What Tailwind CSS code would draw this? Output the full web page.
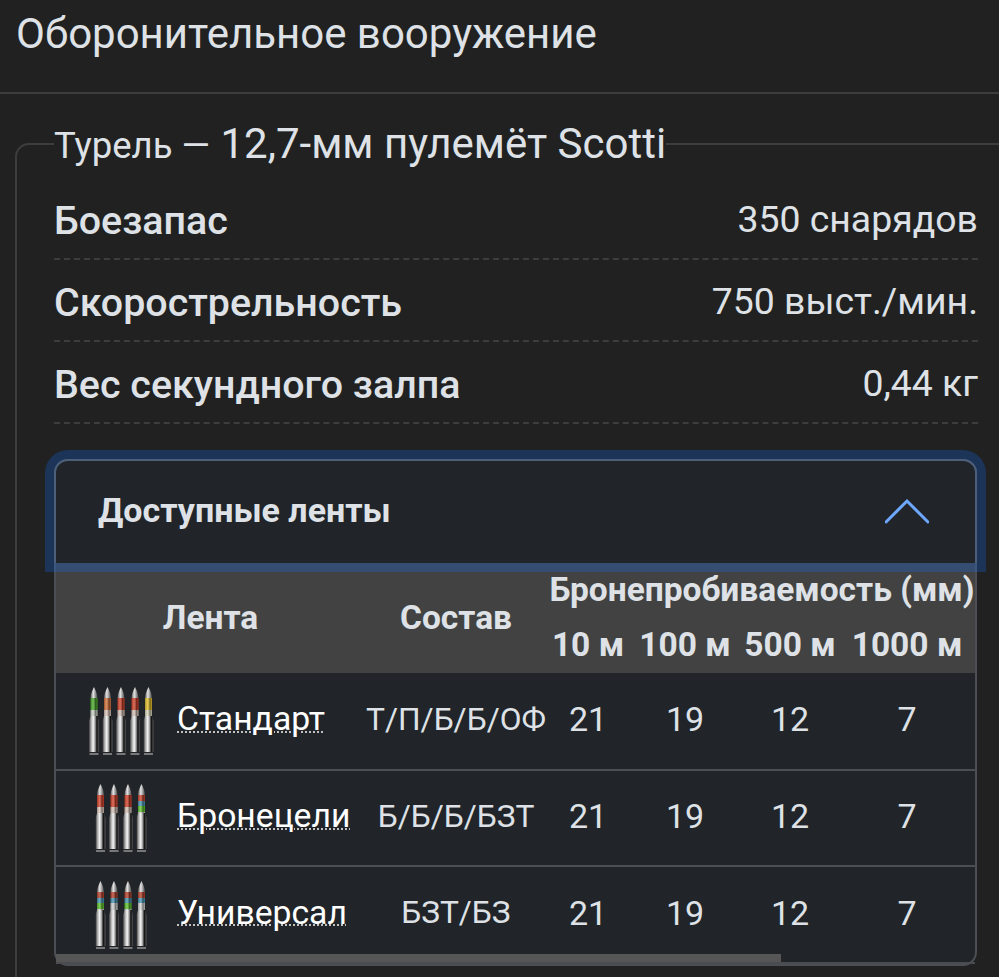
<!DOCTYPE html>
<html lang="ru">
<head>
    <meta charset="UTF-8">
    <meta name="viewport" content="width=device-width, initial-scale=1.0">
    <title>Оборонительное вооружение</title>
    <script src="https://cdn.jsdelivr.net/npm/@tailwindcss/browser@4"></script>
</head>
<body class="bg-[#212121] text-[#dee2e6] font-['Roboto',sans-serif]">
<div class="w-[999px] h-[977px] overflow-hidden">

    <!-- Заголовок -->
    <div class="h-[94px] border-b-2 border-[#3d3d3d] pl-[16px] pt-[10px]">
        <h2 class="text-[42px] leading-[48px] font-normal">Оборонительное вооружение</h2>
    </div>

    <svg class="absolute w-0 h-0" aria-hidden="true">
        <defs>
            <linearGradient id="caseGrad" x1="0" x2="1" y1="0" y2="0">
                <stop offset="0" stop-color="#3a3a3a"/>
                <stop offset="0.2" stop-color="#a8a8a8"/>
                <stop offset="0.42" stop-color="#f6f6f6"/>
                <stop offset="0.62" stop-color="#9a9a9a"/>
                <stop offset="0.78" stop-color="#101010"/>
                <stop offset="1" stop-color="#555555"/>
            </linearGradient>
            <linearGradient id="tipGrad" x1="0" x2="1" y1="0" y2="0">
                <stop offset="0" stop-color="#555555"/>
                <stop offset="0.4" stop-color="#e6e6e6"/>
                <stop offset="1" stop-color="#444444"/>
            </linearGradient>
            <linearGradient id="bandGrad" x1="0" x2="1" y1="0" y2="0">
                <stop offset="0" stop-color="#000000" stop-opacity="0.25"/>
                <stop offset="0.35" stop-color="#ffffff" stop-opacity="0.2"/>
                <stop offset="0.7" stop-color="#000000" stop-opacity="0.45"/>
                <stop offset="1" stop-color="#000000" stop-opacity="0.2"/>
            </linearGradient>
            <g id="bullet">
                <path d="M0 0 C1.5 3 3.5 7 3.5 11 H-3.5 C-3.5 7 -1.5 3 0 0 Z" fill="url(#tipGrad)"/>
                <rect x="-3.5" y="11" width="7" height="18" fill="url(#bandGrad)"/>
                <path d="M-3.5 29 H3.5 L5 34 V65 H-5 V34 Z" fill="url(#caseGrad)"/>
                <rect x="-4.5" y="66" width="9" height="2" fill="#777777"/>
            </g>
        </defs>
    </svg>

    <fieldset class="ml-[15px] mt-[27px] w-[1002px] h-[1000px] border-2 border-[#3d3d3d] rounded-[14px] px-[37px]">
        <legend class="h-[46px] text-[42px] leading-[46px]"><span class="text-[36.5px]">Турель —</span> 12,7-мм пулемёт Scotti</legend>

        <div class="flex justify-between items-center h-[82px] mt-[11px] pt-[5px] border-b-2 border-dashed border-[#3d3d3d]">
            <span class="text-[39.4px] leading-[46px] font-medium">Боезапас</span>
            <span class="text-[37.4px] leading-[46px] pb-[3px]">350 снарядов</span>
        </div>
        <div class="flex justify-between items-center h-[82px] pt-[5px] border-b-2 border-dashed border-[#3d3d3d]">
            <span class="text-[39.4px] leading-[46px] font-medium">Скорострельность</span>
            <span class="text-[37.4px] leading-[46px] pb-[3px]">750 выст./мин.</span>
        </div>
        <div class="flex justify-between items-center h-[82px] pt-[5px] border-b-2 border-dashed border-[#3d3d3d]">
            <span class="text-[39.4px] leading-[46px] font-medium">Вес секундного залпа</span>
            <span class="text-[37.4px] leading-[46px] pb-[3px]">0,44 кг</span>
        </div>

        <!-- Аккордеон -->
        <div class="relative mt-[35px] w-[923px] rounded-[14px] border-2 border-[#4b4f55] bg-[#212529]">
            <div class="relative z-10 h-[104px] -m-[2px] mb-0 flex items-center justify-between pl-[42px] pr-[46px] rounded-t-[14px] border-2 border-b-0 border-[#4d5f78] bg-[#212529] shadow-[0_0_0_9px_rgba(13,110,253,0.25)]">
                <span class="text-[34px] font-bold pb-[4px]">Доступные ленты</span>
                <svg class="w-[44px] h-[26px] mb-[2px]" viewBox="0 0 44 26" fill="none" stroke="#6ea8fe" stroke-width="3" stroke-linecap="round" stroke-linejoin="miter">
                    <path d="M1 24 L22 3 L43 24"/>
                </svg>
            </div>

            <div class="relative overflow-hidden border-b-2 border-[#4a4c50]">
                <table class="w-[1173px] table-fixed border-collapse text-center">
                    <colgroup>
                        <col class="w-[309px]">
                        <col class="w-[182px]">
                        <col class="w-[82px]">
                        <col class="w-[112px]">
                        <col class="w-[98px]">
                        <col class="w-[136px]">
                        <col>
                    </colgroup>
                    <thead class="bg-[#424242] text-[33.5px] font-bold">
                        <tr class="h-[55px] align-bottom">
                            <th rowspan="2" class="align-middle">Лента</th>
                            <th rowspan="2" class="align-middle">Состав</th>
                            <th colspan="4" class="whitespace-nowrap pb-[3px] pl-[2px]">Бронепробиваемость (мм)</th>
                            <th rowspan="2"></th>
                        </tr>
                        <tr class="h-[55px]">
                            <th class="whitespace-nowrap">10 м</th>
                            <th class="whitespace-nowrap">100 м</th>
                            <th class="whitespace-nowrap">500 м</th>
                            <th class="whitespace-nowrap">1000 м</th>
                        </tr>
                    </thead>
                    <tbody class="text-[34px] [&_td]:pb-[3px]">
                        <tr class="h-[97px] border-b-2 border-[#4b4f55]">
                            <td>
                                <div class="flex items-center pl-[29px] gap-[16px]">
                                    <svg class="w-[76px] h-[72px] mt-[3px] shrink-0" viewBox="0 0 76 72">
                                        <rect x="5.5" y="13" width="7" height="12" fill="#4cab2c"/><rect x="5.5" y="25" width="7" height="6" fill="#c9d2c4"/><use href="#bullet" x="9" y="2"/>
                                        <rect x="19" y="13" width="7" height="12" fill="#d0703a"/><rect x="19" y="25" width="7" height="6" fill="#d8c4b8"/><use href="#bullet" x="22.5" y="2"/>
                                        <rect x="32.5" y="13" width="7" height="12" fill="#d2432c"/><rect x="32.5" y="25" width="7" height="6" fill="#d8c4b8"/><use href="#bullet" x="36" y="2"/>
                                        <rect x="46.5" y="13" width="7" height="12" fill="#d2432c"/><rect x="46.5" y="25" width="7" height="6" fill="#d8c4b8"/><use href="#bullet" x="50" y="2"/>
                                        <rect x="60" y="13" width="7" height="12" fill="#e0bd2c"/><rect x="60" y="25" width="7" height="6" fill="#d8d4b8"/><use href="#bullet" x="63.5" y="2"/>
                                    </svg>
                                    <span class="text-[33.7px] text-white underline decoration-dotted decoration-2 decoration-[#c0c0c0] underline-offset-[1px]">Стандарт</span>
                                </div>
                            </td>
                            <td class="text-[31.7px] whitespace-nowrap">Т/П/Б/Б/ОФ</td><td>21</td><td>19</td><td>12</td><td>7</td><td></td>
                        </tr>
                        <tr class="h-[96px] border-b-2 border-[#4b4f55]">
                            <td>
                                <div class="flex items-center pl-[29px] gap-[16px]">
                                    <svg class="w-[76px] h-[72px] mt-[3px] shrink-0" viewBox="0 0 76 72">
                                        <rect x="12" y="13" width="7" height="12" fill="#d2432c"/><rect x="12" y="25" width="7" height="6" fill="#d8c4b8"/><use href="#bullet" x="15.5" y="2"/>
                                        <rect x="25.5" y="13" width="7" height="12" fill="#d2432c"/><rect x="25.5" y="25" width="7" height="6" fill="#d8c4b8"/><use href="#bullet" x="29" y="2"/>
                                        <rect x="39.5" y="13" width="7" height="12" fill="#d2432c"/><rect x="39.5" y="25" width="7" height="6" fill="#d8c4b8"/><use href="#bullet" x="43" y="2"/>
                                        <rect x="53" y="13" width="7" height="6" fill="#c8442e"/><rect x="53" y="19" width="7" height="5" fill="#4a96b4"/><rect x="53" y="24" width="7" height="6" fill="#5ec42e"/><rect x="53" y="30" width="7" height="1" fill="#d0d0d0"/><use href="#bullet" x="56.5" y="2"/>
                                    </svg>
                                    <span class="text-[33.7px] text-white underline decoration-dotted decoration-2 decoration-[#c0c0c0] underline-offset-[1px]">Бронецели</span>
                                </div>
                            </td>
                            <td class="text-[31.7px] whitespace-nowrap">Б/Б/Б/БЗТ</td><td>21</td><td>19</td><td>12</td><td>7</td><td></td>
                        </tr>
                        <tr class="h-[96px]">
                            <td>
                                <div class="flex items-center pl-[29px] gap-[16px]">
                                    <svg class="w-[76px] h-[72px] mt-[3px] shrink-0" viewBox="0 0 76 72">
                                        <rect x="12" y="13" width="7" height="6" fill="#b8432e"/><rect x="12" y="19" width="7" height="5" fill="#4a96b4"/><rect x="12" y="24" width="7" height="6" fill="#5ec42e"/><rect x="12" y="30" width="7" height="1" fill="#d0d0d0"/><use href="#bullet" x="15.5" y="2"/>
                                        <rect x="25.5" y="13" width="7" height="6" fill="#b8432e"/><rect x="25.5" y="19" width="7" height="5" fill="#4a96b4"/><rect x="25.5" y="24" width="7" height="7" fill="#d0d0d0"/><use href="#bullet" x="29" y="2"/>
                                        <rect x="39.5" y="13" width="7" height="6" fill="#b8432e"/><rect x="39.5" y="19" width="7" height="5" fill="#4a96b4"/><rect x="39.5" y="24" width="7" height="6" fill="#5ec42e"/><rect x="39.5" y="30" width="7" height="1" fill="#d0d0d0"/><use href="#bullet" x="43" y="2"/>
                                        <rect x="53" y="13" width="7" height="6" fill="#b8432e"/><rect x="53" y="19" width="7" height="5" fill="#4a96b4"/><rect x="53" y="24" width="7" height="7" fill="#d0d0d0"/><use href="#bullet" x="56.5" y="2"/>
                                    </svg>
                                    <span class="text-[33.7px] text-white underline decoration-dotted decoration-2 decoration-[#c0c0c0] underline-offset-[1px]">Универсал</span>
                                </div>
                            </td>
                            <td class="text-[31.7px] whitespace-nowrap">БЗТ/БЗ</td><td>21</td><td>19</td><td>12</td><td>7</td><td></td>
                        </tr>
                    </tbody>
                </table>
                <!-- полоса прокрутки -->
                <div class="absolute left-0 bottom-0 w-[725px] h-[8px] bg-[#565656]"></div>
            </div>
        </div>
    </fieldset>
</div>
</body>
</html>
